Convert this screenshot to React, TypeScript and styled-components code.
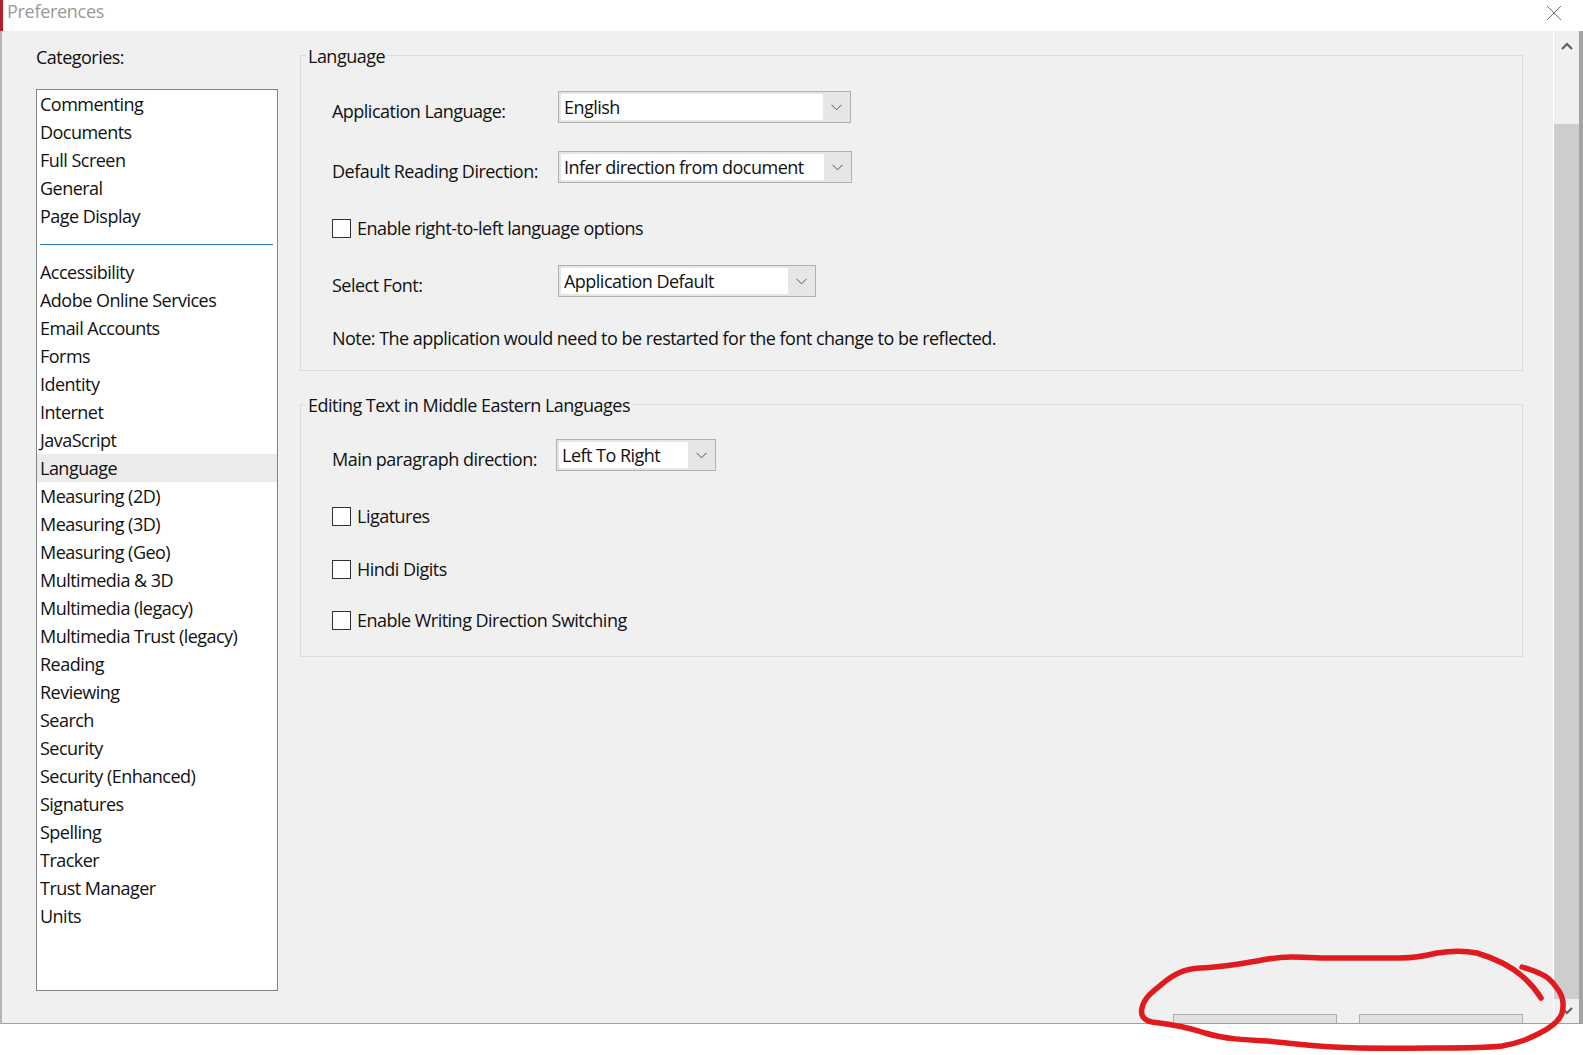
import styled, { createGlobalStyle } from "styled-components";

const GlobalStyles = createGlobalStyle`
  * {
    margin: 0;
    padding: 0;
    box-sizing: border-box;
  }
  body {
    background: #fff;
    color: #111;
    overflow: hidden;
    font-family: "Open Sans", "Noto Sans", sans-serif;
    font-size: 18px;
    letter-spacing: -0.52px;
  }
`;

const topCategories = ["Commenting", "Documents", "Full Screen", "General", "Page Display"];
const otherCategories = [
  "Accessibility",
  "Adobe Online Services",
  "Email Accounts",
  "Forms",
  "Identity",
  "Internet",
  "JavaScript",
  "Language",
  "Measuring (2D)",
  "Measuring (3D)",
  "Measuring (Geo)",
  "Multimedia & 3D",
  "Multimedia (legacy)",
  "Multimedia Trust (legacy)",
  "Reading",
  "Reviewing",
  "Search",
  "Security",
  "Security (Enhanced)",
  "Signatures",
  "Spelling",
  "Tracker",
  "Trust Manager",
  "Units",
];

function Chevron() {
  return (
    <svg width="11" height="7" viewBox="0 0 11 7">
      <polyline points="0.5,0.8 5.5,5.8 10.5,0.8" fill="none" stroke="#555" strokeWidth="1" />
    </svg>
  );
}

function Combo({ value, width }: { value: string; width: number }) {
  return (
    <ComboBox $w={width}>
      <ComboField>{value}</ComboField>
      <ComboArrow>
        <Chevron />
      </ComboArrow>
    </ComboBox>
  );
}

function Check({ label, mt }: { label: string; mt: number }) {
  return (
    <Row $mt={mt}>
      <CheckBox />
      <CheckLabel>{label}</CheckLabel>
    </Row>
  );
}

function App() {
  return (
    <Window>
      <GlobalStyles />
      <TitleBar>
        <Title>Preferences</Title>
        <CloseBtn>
          <svg width="16" height="16" viewBox="0 0 16 16">
            <path d="M1 1 L15 15 M15 1 L1 15" stroke="#6f6f6f" strokeWidth="1" />
          </svg>
        </CloseBtn>
      </TitleBar>

      <Body>
        <Sidebar>
          <SideLabel>Categories:</SideLabel>
          <ListBox>
            {topCategories.map((c) => (
              <ListItem key={c}>{c}</ListItem>
            ))}
            <Separator />
            {otherCategories.map((c) => (
              <ListItem key={c} $selected={c === "Language"}>
                {c}
              </ListItem>
            ))}
          </ListBox>
        </Sidebar>

        <Content>
          <Group $mt={24} $h={316}>
            <Legend>Language</Legend>
            <Row $mt={35}>
              <FieldLabel>Application Language:</FieldLabel>
              <Combo value="English" width={293} />
            </Row>
            <Row $mt={28}>
              <FieldLabel>Default Reading Direction:</FieldLabel>
              <Combo value="Infer direction from document" width={294} />
            </Row>
            <Check label="Enable right-to-left language options" mt={29} />
            <Row $mt={21}>
              <FieldLabel>Select Font:</FieldLabel>
              <Combo value="Application Default" width={258} />
            </Row>
            <Row $mt={25}>
              <Note>Note: The application would need to be restarted for the font change to be reflected.</Note>
            </Row>
          </Group>

          <Group $mt={33} $h={253}>
            <Legend>Editing Text in Middle Eastern Languages</Legend>
            <Row $mt={34}>
              <FieldLabel $w={224}>Main paragraph direction:</FieldLabel>
              <Combo value="Left To Right" width={160} />
            </Row>
            <Check label="Ligatures" mt={29} />
            <Check label="Hindi Digits" mt={21} />
            <Check label="Enable Writing Direction Switching" mt={19} />
          </Group>

          <ButtonRow>
            <DialogButton />
            <DialogButton />
          </ButtonRow>
        </Content>

        <ScrollBar>
          <ScrollArrow>
            <svg width="12" height="8" viewBox="0 0 12 8">
              <polyline points="1,7 6,2 11,7" fill="none" stroke="#606060" strokeWidth="2.2" />
            </svg>
          </ScrollArrow>
          <Thumb />
          <ScrollArrow $down>
            <svg width="12" height="8" viewBox="0 0 12 8">
              <polyline points="1,1 6,6 11,1" fill="none" stroke="#606060" strokeWidth="2.2" />
            </svg>
          </ScrollArrow>
        </ScrollBar>
        <BehindEdge />
      </Body>

      <Annotation width="1583" height="1055" viewBox="0 0 1583 1055">
        <path
          d="M1541 998 C1536 990 1530 983 1522 976 C1514 969 1500 960 1477 953 C1462 950 1450 951 1437 953 C1425 956 1414 958 1400 958 C1378 958 1350 958 1320 958 C1300 957 1285 956 1268 959 C1245 963 1225 967 1200 968 C1185 969 1175 973 1162 984 C1152 992 1144 998 1142 1008 C1140 1016 1145 1021 1152 1022 C1170 1024 1190 1028 1205 1033 C1225 1039 1245 1040 1267 1041 C1290 1043 1310 1046 1333 1047 C1370 1049 1400 1048 1433 1048 C1460 1048 1485 1048 1502 1046 C1520 1043 1530 1038 1540 1033 C1550 1028 1559 1022 1562 1013 C1565 1002 1562 994 1556 987 C1552 981 1548 977 1541 974 C1535 971 1528 969 1522 967"
          fill="none"
          stroke="#e11a1d"
          strokeWidth="5.5"
          strokeLinecap="round"
          strokeLinejoin="round"
        />
      </Annotation>
    </Window>
  );
}

export default App;

const Window = styled.div`
  position: relative;
  width: 1583px;
  height: 1055px;
  display: flex;
  flex-direction: column;
  background: #fff;
`;

const TitleBar = styled.div`
  flex: 0 0 31px;
  display: flex;
  justify-content: space-between;
  align-items: flex-start;
  padding: 0 21px 0 4px;
  border-left: 3px solid #b3202a;
`;

const Title = styled.div`
  color: #9a9a9a;
  line-height: 24px;
  margin-top: -1px;
  letter-spacing: -0.3px;
`;

const CloseBtn = styled.div`
  display: flex;
  margin-top: 5px;
`;

const Body = styled.div`
  flex: 0 0 993px;
  display: flex;
  background: #f0f0f0;
  border-left: 2px solid #b4b4b4;
  border-bottom: 1px solid #a0a0a0;
  overflow: hidden;
`;

const Sidebar = styled.div`
  flex: 0 0 298px;
  display: flex;
  flex-direction: column;
  padding: 14px 0 0 34px;
`;

const SideLabel = styled.div`
  line-height: 24px;
  margin-bottom: 20px;
`;

const ListBox = styled.div`
  width: 242px;
  height: 902px;
  background: #fff;
  border: 1px solid #828282;
  display: flex;
  flex-direction: column;
`;

const ListItem = styled.div<{ $selected?: boolean }>`
  height: 28px;
  line-height: 28px;
  padding-left: 3px;
  white-space: nowrap;
  background: ${(p) => (p.$selected ? "#ebebeb" : "transparent")};
`;

const Separator = styled.div`
  height: 28px;
  display: flex;
  align-items: center;
  padding: 0 4px 0 3px;
  &::after {
    content: "";
    flex: 1;
    height: 1px;
    background: #2b7bbd;
  }
`;

const Content = styled.div`
  flex: 1;
  display: flex;
  flex-direction: column;
  padding-right: 30px;
`;

const Group = styled.div<{ $mt: number; $h: number }>`
  position: relative;
  margin-top: ${(p) => p.$mt}px;
  height: ${(p) => p.$h}px;
  border: 1px solid #dcdcdc;
  padding-left: 31px;
  display: flex;
  flex-direction: column;
`;

const Legend = styled.div`
  position: absolute;
  top: -12px;
  left: 5px;
  padding: 0 2px;
  line-height: 24px;
  background: #f0f0f0;
`;

const Row = styled.div<{ $mt: number }>`
  margin-top: ${(p) => p.$mt}px;
  height: 32px;
  display: flex;
  align-items: center;
`;

const FieldLabel = styled.div<{ $w?: number }>`
  width: ${(p) => p.$w ?? 226}px;
  padding-top: 8px;
  line-height: 24px;
`;

const ComboBox = styled.div<{ $w: number }>`
  width: ${(p) => p.$w}px;
  height: 32px;
  display: flex;
  border: 1px solid #b0b0b0;
  background: #e6e6e6;
  padding: 2px 0 2px 2px;
`;

const ComboField = styled.div`
  flex: 1;
  background: #fff;
  padding-left: 3px;
  line-height: 26px;
  white-space: nowrap;
`;

const ComboArrow = styled.div`
  flex: 0 0 27px;
  display: flex;
  align-items: center;
  justify-content: center;
`;

const CheckBox = styled.div`
  width: 19px;
  height: 19px;
  border: 1px solid #333;
  background: #fff;
  margin-right: 6px;
`;

const CheckLabel = styled.div`
  line-height: 24px;
`;

const Note = styled.div`
  line-height: 24px;
  white-space: nowrap;
`;

const ButtonRow = styled.div`
  margin-top: auto;
  margin-bottom: -21px;
  display: flex;
  justify-content: flex-end;
  gap: 22px;
`;

const DialogButton = styled.div`
  width: 164px;
  height: 30px;
  background: #e1e1e1;
  border: 1px solid #adadad;
`;

const ScrollBar = styled.div`
  flex: 0 0 26px;
  display: flex;
  flex-direction: column;
  border-left: 1px solid #fff;
  background: #f0f0f0;
`;

const ScrollArrow = styled.div<{ $down?: boolean }>`
  flex: 0 0 ${(p) => (p.$down ? 24 : 30)}px;
  display: flex;
  align-items: center;
  justify-content: center;
`;

const Thumb = styled.div`
  flex: 1;
  margin-top: 63px;
  background: #cdcdcd;
`;

const BehindEdge = styled.div`
  flex: 0 0 4px;
  background: #a3a3a3;
`;

const Annotation = styled.svg`
  position: absolute;
  inset: 0;
  pointer-events: none;
`;
